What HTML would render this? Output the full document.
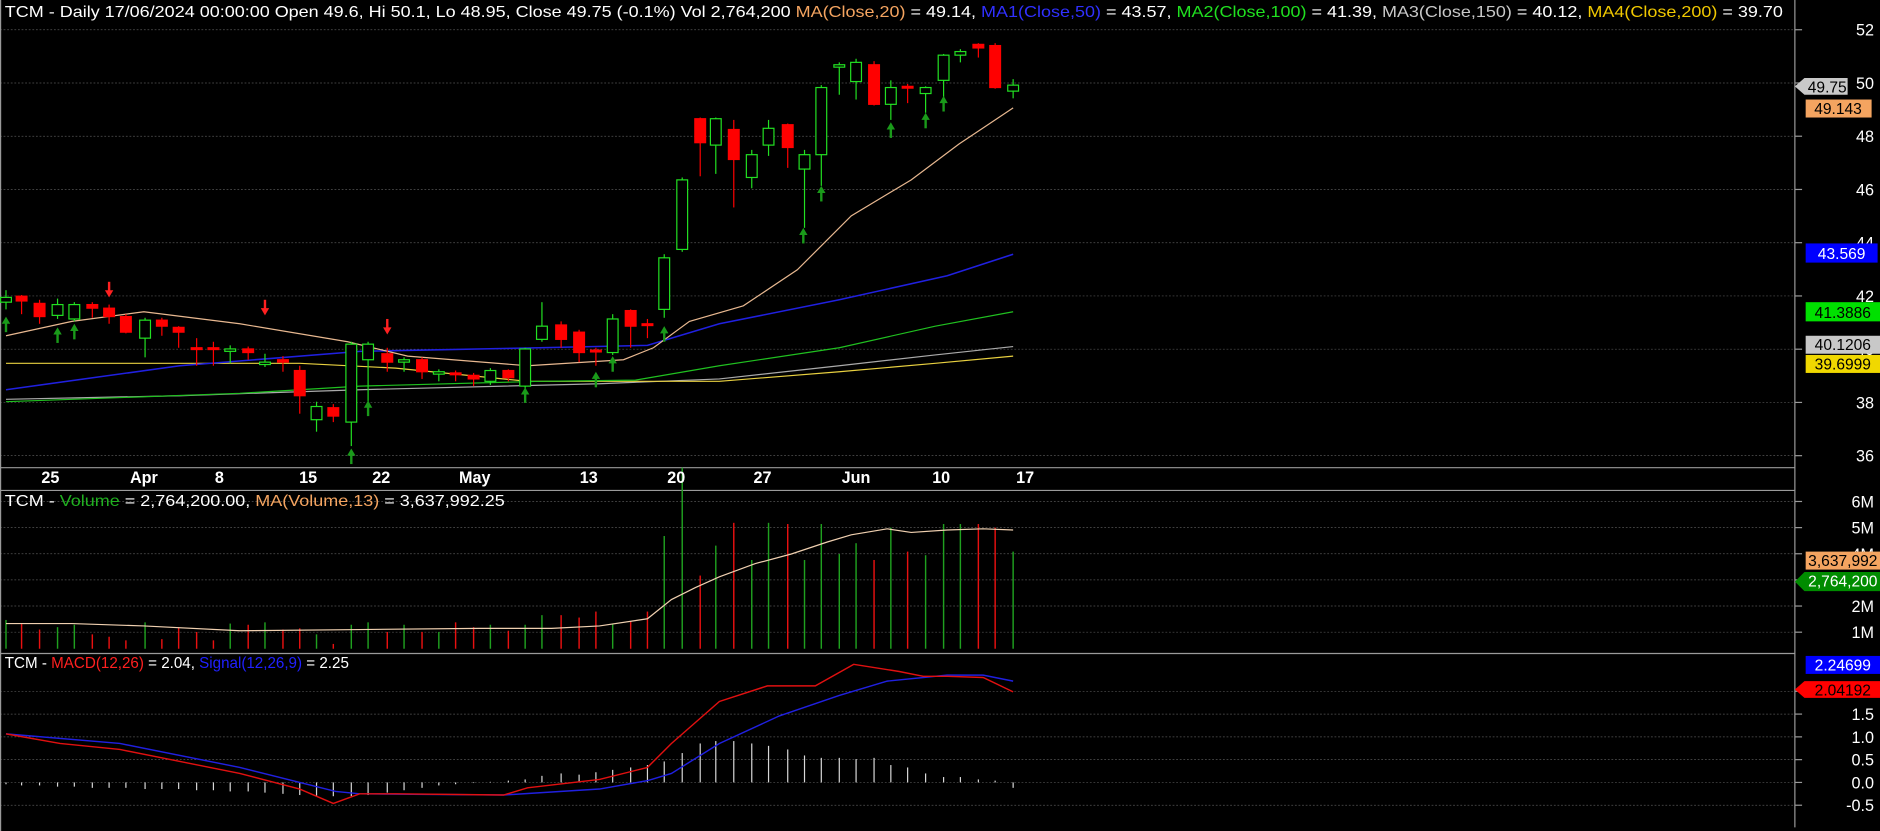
<!DOCTYPE html>
<html><head><meta charset="utf-8"><style>
html,body{margin:0;padding:0;background:#000;width:1880px;height:831px;overflow:hidden}
svg{display:block}
text{font-family:"Liberation Sans",sans-serif}
</style></head><body>
<svg id="s" width="1880" height="831" viewBox="0 0 1568 693" preserveAspectRatio="none" xmlns="http://www.w3.org/2000/svg">
<rect width="1568" height="693" fill="#000"/>
<g id="grid" stroke="#555" stroke-width="0.6" stroke-dasharray="1.5,1.5"></g>
<!-- frame lines -->
<g stroke="#9a9a9a" stroke-width="1">
<line x1="0" y1="390" x2="1497" y2="390"/>
<line x1="0" y1="409" x2="1497" y2="409"/>
<line x1="0" y1="545" x2="1497" y2="545"/>
<line x1="1497" y1="0" x2="1497" y2="690"/>
<line x1="0.5" y1="0" x2="0.5" y2="693"/>
</g>
<g id="ticks" stroke="#9a9a9a" stroke-width="1"></g>
<g id="ma" fill="none" stroke-width="1">
<polyline stroke="#aaaaaa" points="5,333 150,330 300,325 500,320 600,316 700,305 780,296 845,289"/>
<polyline stroke="#e8d040" points="5,303 250,303 330,307 440,318 600,318 700,310 780,303 845,297"/>
<polyline stroke="#20c020" points="5,335 200,328 300,322 450,318 530,317 600,305 700,290 780,272 845,260"/>
<polyline stroke="#2020e0" stroke-width="1.3" points="5,325 150,305 300,293 450,290 540,288 600,270 700,250 790,230 845,212"/>
<polyline stroke="#e8b890" points="5,280 60,268 120,260 200,270 290,285 340,297 440,305 520,300 545,290 575,268 620,255 665,225 710,180 760,150 800,120 845,90"/>
</g>
<g id="candles"></g>
<g id="arrows"></g>
<g id="vol"></g>
<polyline fill="none" stroke="#f0d0b0" stroke-width="1" points="5,520 60,520 120,522 200,526 300,525 400,524 460,524 500,522 540,516 560,500 580,490 600,481 630,470 660,462 690,452 710,446 740,441 760,444 790,442 820,441 845,442"/>
<g id="hist" stroke="#d8d8d8" stroke-width="1"></g>
<polyline fill="none" stroke="#2020e0" stroke-width="1.2" points="5,612 100,620 200,640 280,660 300,662 420,663 500,658 540,651 560,645 600,620 650,597 700,580 740,568 790,563 820,563 845,568"/>
<polyline fill="none" stroke="#e01010" stroke-width="1.2" points="5,612 50,620 100,625 150,635 200,645 250,658 278,670 300,662 330,662 420,663 440,657 500,650 540,640 560,620 600,585 640,572 680,572 712,554 750,560 770,564 790,564 820,565 845,577"/>
<!-- axis labels -->
<g id="ylab" fill="#fff" font-size="13.5" text-anchor="end"></g>
<g fill="#fff" font-size="13.5" font-weight="bold" text-anchor="middle">
<text x="42" y="403">25</text><text x="120" y="403">Apr</text><text x="183" y="403">8</text><text x="257" y="403">15</text><text x="318" y="403">22</text><text x="396" y="403">May</text><text x="491" y="403">13</text><text x="564" y="403">20</text><text x="636" y="403">27</text><text x="714" y="403">Jun</text><text x="785" y="403">10</text><text x="855" y="403">17</text>
</g>
<!-- titles -->
<text x="4" y="14" font-size="13.4" fill="#fff" textLength="1483" lengthAdjust="spacingAndGlyphs">TCM - Daily 17/06/2024 00:00:00 Open 49.6, Hi 50.1, Lo 48.95, Close 49.75 (-0.1%) Vol 2,764,200 <tspan fill="#f4a460">MA(Close,20)</tspan> = 49.14, <tspan fill="#3030ff">MA1(Close,50)</tspan> = 43.57, <tspan fill="#20e020">MA2(Close,100)</tspan> = 41.39, <tspan fill="#c8c8c8">MA3(Close,150)</tspan> = 40.12, <tspan fill="#f0c800">MA4(Close,200)</tspan> = 39.70</text>
<text x="4" y="422" font-size="13.4" fill="#fff" textLength="417" lengthAdjust="spacingAndGlyphs">TCM - <tspan fill="#20b020">Volume</tspan> = 2,764,200.00, <tspan fill="#f4a460">MA(Volume,13)</tspan> = 3,637,992.25</text>
<text x="4" y="557" font-size="13.4" fill="#fff" textLength="287" lengthAdjust="spacingAndGlyphs">TCM - <tspan fill="#ff2020">MACD(12,26)</tspan> = 2.04, <tspan fill="#2020ff">Signal(12,26,9)</tspan> = 2.25</text>
<!-- value tags -->
<g font-size="13" text-anchor="middle">
<polygon points="1497,72 1505,65 1541,65 1541,79 1505,79" fill="#c8c8c8"/><text x="1524" y="77" fill="#000">49.75</text>
<rect x="1506" y="83" width="55" height="15" fill="#f4a460"/><text x="1533" y="95" fill="#000">49.143</text>
<rect x="1506" y="203" width="60" height="16" fill="#0000ff"/><text x="1536" y="216" fill="#fff">43.569</text>
<rect x="1506" y="252" width="62" height="16" fill="#00e000"/><text x="1537" y="265" fill="#000">41.3886</text>
<rect x="1506" y="280" width="62" height="15" fill="#c8c8c8"/><text x="1537" y="292" fill="#000">40.1206</text>
<rect x="1506" y="296" width="62" height="15" fill="#f0d800"/><text x="1537" y="308" fill="#000">39.6999</text>
<rect x="1506" y="460" width="62" height="15" fill="#f4a460"/><text x="1537" y="472" fill="#000">3,637,992</text>
<polygon points="1497,485 1505,477 1568,477 1568,493 1505,493" fill="#008c00"/><text x="1537" y="489" fill="#fff">2,764,200</text>
<rect x="1506" y="547" width="62" height="15" fill="#0000ff"/><text x="1537" y="559" fill="#fff">2.24699</text>
<polygon points="1497,575 1505,568 1568,568 1568,582 1505,582" fill="#ff0000"/><text x="1537" y="580" fill="#000">2.04192</text>
</g>
<script>
var NS="http://www.w3.org/2000/svg";
function el(p,t,a){var e=document.createElementNS(NS,t);for(var k in a)e.setAttribute(k,a[k]);document.getElementById(p).appendChild(e);return e;}
// grid
var py=function(p){return 24.8+(52-p)*22.2;};
for(var p=36;p<=52;p+=2){var y=py(p);el("grid","line",{x1:0,y1:y,x2:1497,y2:y});el("ticks","line",{x1:1497,y1:y,x2:1503,y2:y});var t=el("ylab","text",{x:1563,y:y+5});t.textContent=p;}
var vy=function(v){return 549-21.8*v;};
for(var v=1;v<=6;v++){var y=vy(v);el("grid","line",{x1:0,y1:y,x2:1497,y2:y});el("ticks","line",{x1:1497,y1:y,x2:1503,y2:y});if(v!=3&&v!=4){var t=el("ylab","text",{x:1563,y:y+5});t.textContent=v+"M";}}
var my=function(m){return 652.5-38*m;};
[-0.5,0,0.5,1,1.5,2].forEach(function(m){var y=my(m);el("grid","line",{x1:0,y1:y,x2:1497,y2:y});el("ticks","line",{x1:1497,y1:y,x2:1503,y2:y});if(m<2){var t=el("ylab","text",{x:1563,y:y+5});t.textContent=m.toFixed(1);}});
var t=el("ylab","text",{x:1563,y:vy(4)+5});t.textContent="4M";
// candles x,top,bot,hi,lo,c
var C=[[5,248,252,242,258,1],[18,247,251,246,262,0],[33,253,264,250,270,0],[48,254,263,249,266,1],[62,254,266,252,268,1],[77,254,257,252,265,0],[91,257,264,254,270,0],[105,264,277,262,278,0],[121,267,282,265,298,1],[135,267,272,265,280,0],[149,273,277,272,290,0],[164,290,291,282,305,0],[178,290,291,285,305,0],[192,291,293,288,303,1],[207,291,294,289,300,0],[221,302,304,295,306,1],[236,300,302,297,310,0],[250,309,330,305,345,0],[264,339,350,335,360,1],[278,340,347,337,352,0],[293,287,352,285,372,1],[307,287,300,285,345,1],[323,295,302,290,310,0],[337,300,302,298,310,1],[352,300,310,298,316,0],[366,310,312,308,318,1],[380,311,312,309,318,0],[395,313,316,311,322,0],[409,309,318,307,321,1],[424,309,315,308,318,0],[438,291,322,290,325,1],[452,272,283,252,285,1],[468,271,283,268,290,0],[483,277,294,275,302,0],[497,292,293,290,305,0],[511,266,294,262,296,1],[526,259,272,258,290,0],[540,270,271,266,282,0],[554,215,258,212,265,1],[569,150,208,148,210,1],[584,99,119,98,147,0],[597,99,121,98,145,1],[612,108,133,100,173,0],[627,129,148,125,157,1],[641,107,121,100,130,1],[657,104,123,103,140,0],[671,129,141,125,190,1],[685,73,129,71,155,1],[700,54,56,52,79,1],[714,52,68,49,83,1],[729,54,87,51,88,0],[743,73,87,67,100,1],[757,72,73,70,86,0],[772,73,78,72,94,1],[787,46,67,45,82,1],[801,43,46,41,52,1],[816,37,40,36,48,0],[830,38,73,36,74,0],[845,71,76,66,82,1]];
C.forEach(function(c){var col=c[5]?"#22e022":"#ff0000";
el("candles","line",{x1:c[0],y1:c[3],x2:c[0],y2:c[4],stroke:col,"stroke-width":1});
var h=Math.max(c[2]-c[1],1.5);
el("candles","rect",{x:c[0]-4.5,y:c[1],width:9,height:h,fill:c[5]?"#000":"#ff0000",stroke:col,"stroke-width":1});});
// arrows
function arr(x,y,up){var col=up?"#1a9a1a":"#ff2020";
if(up){el("arrows","rect",{x:x-1,y:y,width:2,height:10,fill:col});el("arrows","polygon",{points:(x-3.5)+","+(y+3)+" "+x+","+(y-3)+" "+(x+3.5)+","+(y+3),fill:col});}
else{el("arrows","rect",{x:x-1,y:y-10,width:2,height:10,fill:col});el("arrows","polygon",{points:(x-3.5)+","+(y-3)+" "+x+","+(y+3)+" "+(x+3.5)+","+(y-3),fill:col});}}
[[5,267],[48,276],[62,273],[293,377],[307,337],[438,326],[497,313],[511,300],[554,275],[670,193],[685,158],[743,105],[772,97],[787,83]].forEach(function(a){arr(a[0],a[1],1);});
[[91,245],[221,260],[323,276]].forEach(function(a){arr(a[0],a[1],0);});
// volume
var VT=[517,520,525,523,521,529,531,534,519,533,523,527,534,520,521,519,525,524,529,537,521,519,527,521,527,527,519,523,521,526,521,513,513,515,510,520,518,510,447,390,480,455,436,467,436,437,467,437,462,453,467,440,460,463,437,437,437,440,460];
C.forEach(function(c,i){el("vol","line",{x1:c[0],y1:VT[i],x2:c[0],y2:541,stroke:c[5]?"#1fa01f":"#e81010","stroke-width":1.2});});
// histogram
var H=[654,655,655,656,656,657,657,657,658,658,658,659,659,660,660,661,662,663,664,664,664,663,661,659,657,655,654,653,652,651,650,647,645,646,644,642,640,638,635,628,620,618,618,620,622,625,630,632,632,633,632,638,640,645,648,648,650,651,657];
C.forEach(function(c,i){el("hist","line",{x1:c[0],y1:652.5,x2:c[0],y2:H[i]});});
</script>
</svg>
</body></html>
